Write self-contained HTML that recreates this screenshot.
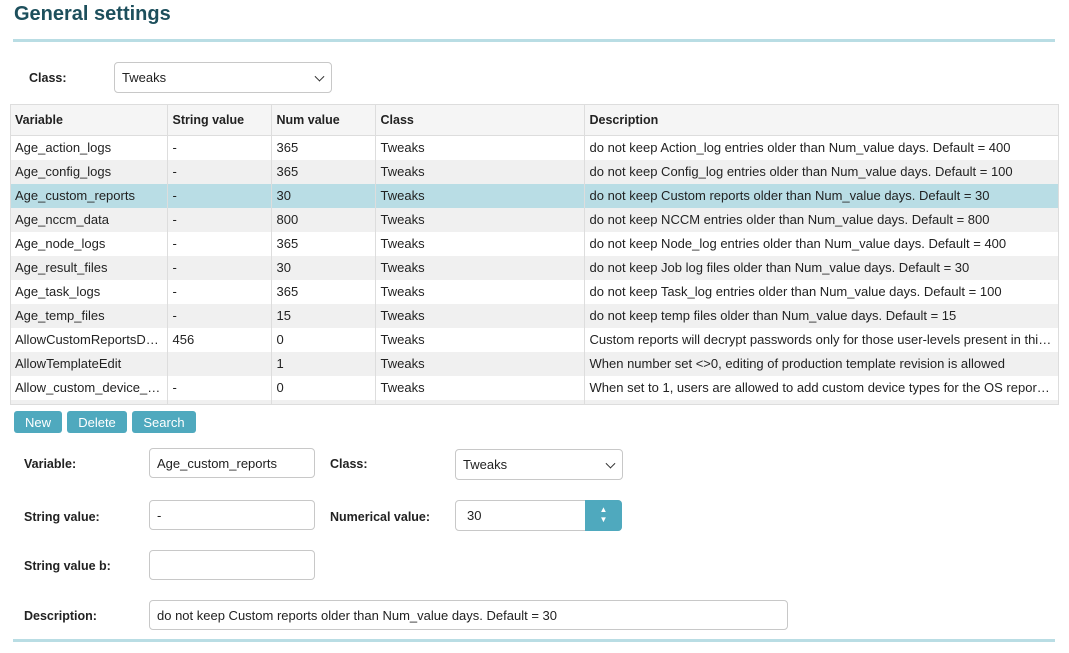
<!DOCTYPE html>
<html><head><style>
*{box-sizing:border-box;margin:0;padding:0}
body{width:1069px;height:653px;background:#fff;font-family:"Liberation Sans",sans-serif;font-size:12.5px;color:#222;position:relative;overflow:hidden}
.a{position:absolute}
h1{position:absolute;left:14px;top:3px;font-size:20px;color:#1d4f5c;font-weight:bold}
.line{position:absolute;left:13px;width:1042px;height:3px;background:#b9dde4}
.lbl{position:absolute;font-weight:bold;font-size:12.5px;color:#222}
.inp{position:absolute;border:1px solid #c8c8c8;border-radius:4px;background:#fff;padding-left:7px;display:flex;align-items:center;font-size:13px}
.chev{position:absolute;right:8px;top:50%;width:7px;height:7px;border-right:1.6px solid #333;border-bottom:1.6px solid #333;transform:translateY(-70%) rotate(45deg)}
table{position:absolute;left:10px;top:104px;width:1049px;border-collapse:collapse;table-layout:fixed}
td,th{height:24px;padding:0 5px;text-align:left;white-space:nowrap;overflow:hidden;text-overflow:ellipsis;border-right:1px solid #ddd;font-size:13px;font-weight:normal}
th{height:31px;font-weight:bold;background:#f5f5f5;border-bottom:1px solid #ddd;border-top:1px solid #ddd;font-size:12.5px}
td{background:#fff}
tr:nth-child(odd) td{background:#f0f0f0}
tr.sel td{background:#b9dde5!important}
.btn{position:absolute;top:411px;height:22px;background:#4fa9be;color:#fff;border-radius:3px;font-size:13px;display:flex;align-items:center;justify-content:center}
</style></head><body>
<h1>General settings</h1>
<div class="line" style="top:39px"></div>
<div class="lbl" style="left:29px;top:71px">Class:</div>
<div class="inp" style="left:114px;top:62px;width:218px;height:31px">Tweaks<span class="chev"></span></div>
<div class="a" style="left:10px;top:104px;width:1049px;height:301px;border:1px solid #ddd;overflow:hidden;background:#fff">
<table style="left:-1px;top:-1px">
<colgroup><col style="width:157px"><col style="width:104px"><col style="width:104px"><col style="width:209px"><col></colgroup>
<tr><th>Variable</th><th>String value</th><th>Num value</th><th>Class</th><th>Description</th></tr>
<tr><td>Age_action_logs</td><td>-</td><td>365</td><td>Tweaks</td><td>do not keep Action_log entries older than Num_value days. Default = 400</td></tr>
<tr><td>Age_config_logs</td><td>-</td><td>365</td><td>Tweaks</td><td>do not keep Config_log entries older than Num_value days. Default = 100</td></tr>
<tr class="sel"><td>Age_custom_reports</td><td>-</td><td>30</td><td>Tweaks</td><td>do not keep Custom reports older than Num_value days. Default = 30</td></tr>
<tr><td>Age_nccm_data</td><td>-</td><td>800</td><td>Tweaks</td><td>do not keep NCCM entries older than Num_value days. Default = 800</td></tr>
<tr><td>Age_node_logs</td><td>-</td><td>365</td><td>Tweaks</td><td>do not keep Node_log entries older than Num_value days. Default = 400</td></tr>
<tr><td>Age_result_files</td><td>-</td><td>30</td><td>Tweaks</td><td>do not keep Job log files older than Num_value days. Default = 30</td></tr>
<tr><td>Age_task_logs</td><td>-</td><td>365</td><td>Tweaks</td><td>do not keep Task_log entries older than Num_value days. Default = 100</td></tr>
<tr><td>Age_temp_files</td><td>-</td><td>15</td><td>Tweaks</td><td>do not keep temp files older than Num_value days. Default = 15</td></tr>
<tr><td>AllowCustomReportsDecrypt</td><td>456</td><td>0</td><td>Tweaks</td><td>Custom reports will decrypt passwords only for those user-levels present in this list of levels</td></tr>
<tr><td>AllowTemplateEdit</td><td></td><td>1</td><td>Tweaks</td><td>When number set &lt;&gt;0, editing of production template revision is allowed</td></tr>
<tr><td>Allow_custom_device_types</td><td>-</td><td>0</td><td>Tweaks</td><td>When set to 1, users are allowed to add custom device types for the OS reports view</td></tr>
<tr><td></td><td></td><td></td><td></td><td></td></tr>
</table></div>
<div class="btn" style="left:14px;width:48px">New</div>
<div class="btn" style="left:67px;width:60px">Delete</div>
<div class="btn" style="left:132px;width:64px">Search</div>
<div class="lbl" style="left:24px;top:457px">Variable:</div>
<div class="inp" style="left:149px;top:448px;width:166px;height:30px">Age_custom_reports</div>
<div class="lbl" style="left:330px;top:457px">Class:</div>
<div class="inp" style="left:455px;top:449px;width:168px;height:31px">Tweaks<span class="chev"></span></div>
<div class="lbl" style="left:24px;top:510px">String value:</div>
<div class="inp" style="left:149px;top:500px;width:166px;height:30px">-</div>
<div class="lbl" style="left:330px;top:510px">Numerical value:</div>
<div class="inp" style="left:455px;top:500px;width:167px;height:31px;padding-left:11px">30
<div class="a" style="right:-1px;top:-1px;width:37px;height:31px;background:#4fa9be;border-radius:0 4px 4px 0;color:#fff;font-size:8px;line-height:10px;text-align:center;padding-top:5px">▲<br>▼</div></div>
<div class="lbl" style="left:24px;top:559px">String value b:</div>
<div class="inp" style="left:149px;top:550px;width:166px;height:30px"></div>
<div class="lbl" style="left:24px;top:609px">Description:</div>
<div class="inp" style="left:149px;top:600px;width:639px;height:30px">do not keep Custom reports older than Num_value days. Default = 30</div>
<div class="line" style="top:639px"></div>
</body></html>
